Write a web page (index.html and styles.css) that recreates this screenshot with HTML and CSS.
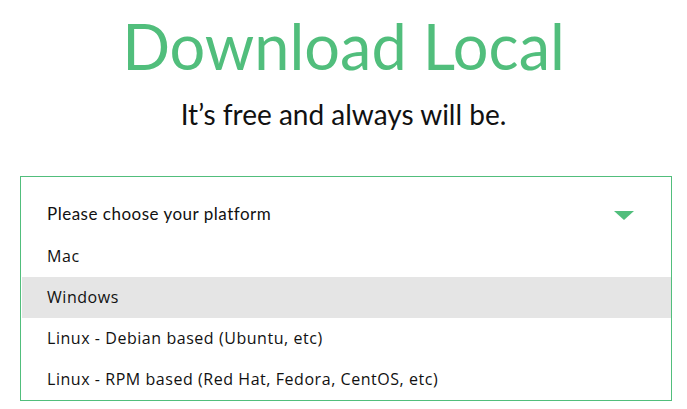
FILE: index.html
```html
<!DOCTYPE html>
<html>
<head>
<meta charset="utf-8">
<link rel="stylesheet" href="styles.css">
</head>
<body>
<main class="page">
  <h1 class="title">Download Local</h1>
  <p class="subtitle">It’s free and always will be.</p>
  <div class="picker">
    <div class="picker-head">
      <span class="picker-label">Please choose your platform</span>
      <span class="caret"></span>
    </div>
    <ul class="options">
      <li class="option">Mac</li>
      <li class="option option-active">Windows</li>
      <li class="option">Linux - Debian based (Ubuntu, etc)</li>
      <li class="option">Linux - RPM based (Red Hat, Fedora, CentOS, etc)</li>
    </ul>
  </div>
</main>
</body>
</html>
```
FILE: styles.css
```css
* { box-sizing: border-box; }
html, body { margin: 0; padding: 0; background: #fff; }
body { font-family: Lato, "Open Sans", sans-serif; color: #111; }
.page {
  display: flex;
  flex-direction: column;
  align-items: center;
  padding-top: 6px;
}
.title {
  margin: 0;
  font-weight: 400;
  font-size: 63px;
  line-height: 80px;
  color: #51be7c;
}
.subtitle {
  margin: 10px 0 0;
  font-size: 28px;
  line-height: 36px;
  color: #111;
}
.picker {
  align-self: flex-start;
  margin: 44px 0 0 20px;
  width: 652px;
  border: 1px solid #51be7c;
}
.picker-head {
  height: 59px;
  display: flex;
  align-items: center;
  justify-content: space-between;
  padding: 14px 37px 0 26px;
}
.picker-label { font-size: 17px; letter-spacing: 0.5px; }
.caret {
  width: 0; height: 0;
  margin-top: 4px;
  border-left: 10px solid transparent;
  border-right: 10px solid transparent;
  border-top: 9px solid #51be7c;
}
.options { list-style: none; margin: 0 0 0 1px; padding: 0; }
.option {
  height: 41px;
  display: flex;
  align-items: center;
  padding: 0 0 2px 25px;
  font-family: "Open Sans", sans-serif;
  font-size: 16px;
  letter-spacing: 0.55px;
  color: #111;
}
.option-active { background: #e5e5e5; }
```
